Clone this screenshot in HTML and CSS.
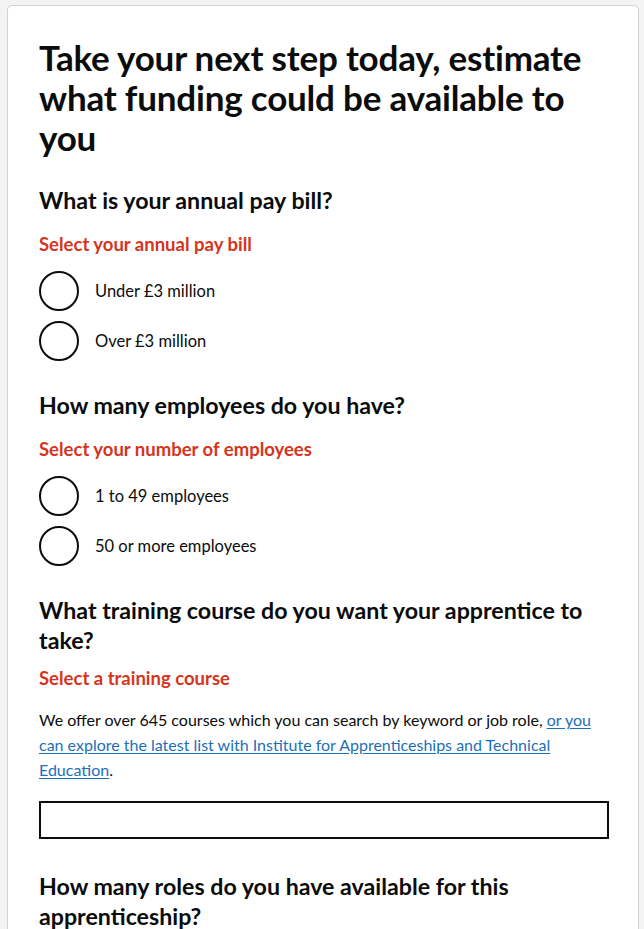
FILE: index.html
```html
<!DOCTYPE html>
<html lang="en">
<head>
<meta charset="utf-8">
<title>Funding estimate</title>
<link rel="stylesheet" href="styles.css">
</head>
<body>
<main class="card">
  <h1 class="title">Take your next step today, estimate what funding could be available to you</h1>

  <section class="question">
    <h2 class="q-title">What is your annual pay bill?</h2>
    <p class="error">Select your annual pay bill</p>
    <div class="options">
      <label class="option"><span class="radio"></span><span class="opt-label">Under £3 million</span></label>
      <label class="option"><span class="radio"></span><span class="opt-label">Over £3 million</span></label>
    </div>
  </section>

  <section class="question">
    <h2 class="q-title">How many employees do you have?</h2>
    <p class="error">Select your number of employees</p>
    <div class="options">
      <label class="option"><span class="radio"></span><span class="opt-label">1 to 49 employees</span></label>
      <label class="option"><span class="radio"></span><span class="opt-label">50 or more employees</span></label>
    </div>
  </section>

  <section class="question">
    <h2 class="q-title">What training course do you want your apprentice to take?</h2>
    <p class="error error-tight">Select a training course</p>
    <p class="hint">We offer over 645 courses which you can search by keyword or job role, <a href="#" class="link">or you can explore the latest list with Institute for Apprenticeships and Technical Education</a>.</p>
    <div class="text-input"></div>
  </section>

  <section class="question question-last">
    <h2 class="q-title">How many roles do you have available for this apprenticeship?</h2>
  </section>
</main>
</body>
</html>
```

FILE: styles.css
```css
html, body {
  margin: 0;
  padding: 0;
}
body {
  background: #f3f3f3;
  font-family: Lato, "Liberation Sans", sans-serif;
  color: #0b0c0c;
  padding: 5px 5px 0 7px;
}
.card {
  background: #ffffff;
  border: 1px solid #d2d2d2;
  border-radius: 5px;
  padding: 31px 29px 40px 31px;
  min-height: 1000px;
}
.title {
  margin: 0 0 28px;
  font-size: 35px;
  line-height: 40px;
  font-weight: 700;
  letter-spacing: -0.2px;
}
.question {
  margin: 0 0 29px;
}
.question-last {
  margin-top: 32px;
}
.q-title {
  margin: 0;
  font-size: 23.2px;
  line-height: 30px;
  font-weight: 700;
}
.error {
  margin: 17px 0 0;
  color: #d4351c;
  font-size: 18.5px;
  line-height: 24px;
  font-weight: 700;
}
.error-tight {
  margin-top: 11px;
}
.options {
  margin-top: 15px;
  display: flex;
  flex-direction: column;
  gap: 10px;
}
.option {
  display: flex;
  align-items: center;
  gap: 16px;
}
.radio {
  width: 36px;
  height: 36px;
  border: 2px solid #0b0c0c;
  border-radius: 50%;
  flex: none;
}
.opt-label {
  font-size: 16.5px;
  line-height: 24px;
}
.hint {
  margin: 17px 0 0;
  font-size: 16px;
  line-height: 25px;
}
.link {
  color: #1d70b8;
  text-decoration: underline;
  text-underline-offset: 2px;
}
.text-input {
  margin-top: 19px;
  height: 34px;
  border: 2px solid #0b0c0c;
}
```
